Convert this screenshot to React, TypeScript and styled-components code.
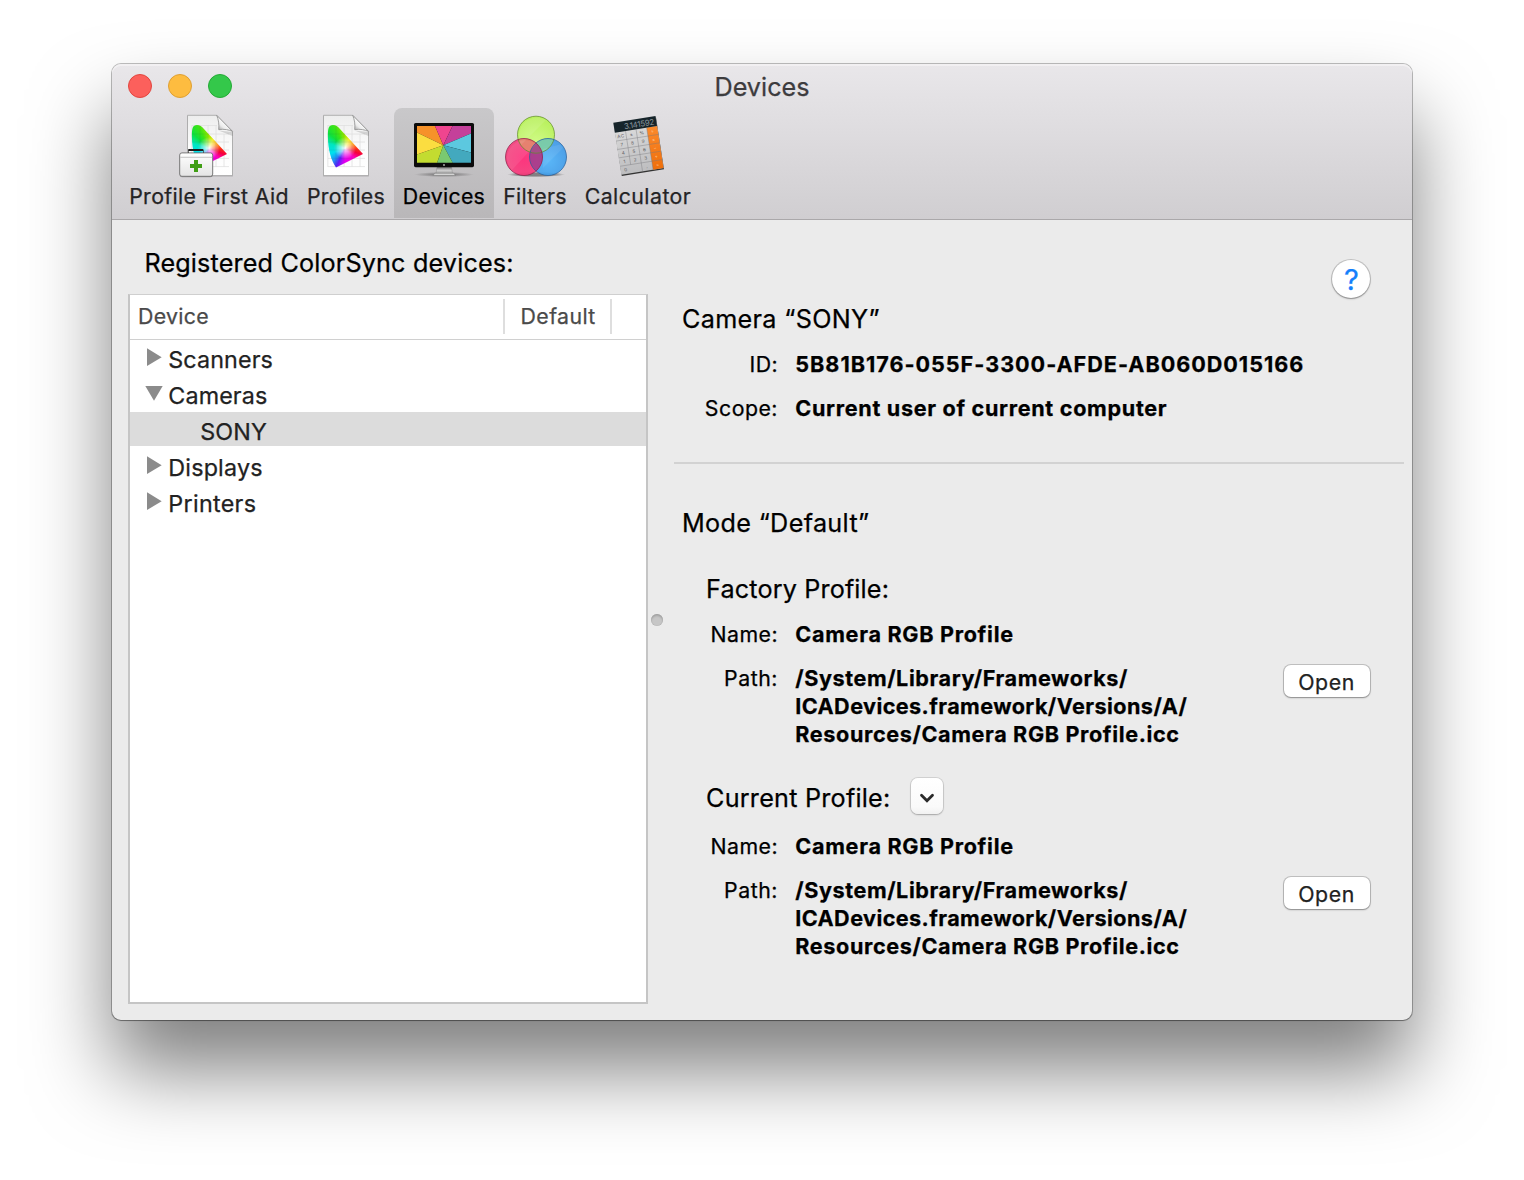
import React from "react";
import styled, { createGlobalStyle } from "styled-components";

const GlobalStyle = createGlobalStyle`
  * { box-sizing: border-box; }
  html, body { margin: 0; background: #fff; }
  body {
    font-family: Inter, "Liberation Sans", sans-serif;
    color: #000;
    overflow: hidden;
    -webkit-text-stroke: 0.25px currentColor;
  }
  button { font: inherit; color: inherit; padding: 0; border: 0; }
  svg text { -webkit-text-stroke: 0; }
`;

/* ---------- window chrome ---------- */

const Desktop = styled.div`
  width: 1524px;
  height: 1180px;
  padding: 64px 112px 0;
  overflow: hidden;
`;

const Window = styled.div`
  display: flex;
  flex-direction: column;
  width: 1300px;
  height: 956px;
  border-radius: 9px;
  background: #ebebeb;
  box-shadow: 0 0 0 1px rgba(0, 0, 0, 0.25), 0 1px 1px rgba(0, 0, 0, 0.25), 0 50px 80px rgba(0, 0, 0, 0.5);
`;

const Header = styled.header`
  height: 156px;
  border-bottom: 1px solid #aaa8aa;
  border-radius: 9px 9px 0 0;
  background: linear-gradient(#e9e7ea, #d0ced1);
  box-shadow: inset 0 2px 0 rgba(255, 255, 255, 0.4);
`;

const TitleBar = styled.div`
  display: grid;
  grid-template-columns: 1fr auto 1fr;
  align-items: center;
  height: 44px;
  padding: 0 16px;
`;

const Lights = styled.div`
  display: flex;
  gap: 16px;
`;

const Light = styled.span<{ $fill: string; $edge: string }>`
  width: 24px;
  height: 24px;
  border-radius: 50%;
  border: 1px solid ${(p) => p.$edge};
  background: ${(p) => p.$fill};
`;

const Title = styled.h1`
  margin: 2px 0 0;
  font-size: 25.2px;
  font-weight: 400;
  line-height: 30px;
  color: #3d3c3e;
`;

const Toolbar = styled.nav`
  display: flex;
  height: 110px;
  padding-left: 8px;
`;

const ToolItem = styled.button<{ $width: number; $active?: boolean; $track: number }>`
  display: flex;
  flex-direction: column;
  align-items: center;
  gap: 4px;
  width: ${(p) => p.$width}px;
  height: 110px;
  padding-top: 6px;
  border-radius: 8px 8px 0 0;
  background: ${(p) => (p.$active ? "linear-gradient(#c9c8ca, #b9b7b9)" : "none")};
  color: ${(p) => (p.$active ? "#000" : "#242325")};
  font-size: 21.3px;
  line-height: 28px;
  letter-spacing: ${(p) => p.$track}px;
  white-space: nowrap;
`;

const IconBox = styled.svg`
  display: block;
  width: 64px;
  height: 64px;
  overflow: visible;
`;

/* ---------- content ---------- */

const Content = styled.main`
  display: flex;
  flex: 1;
  min-height: 0;
`;

const Sidebar = styled.section`
  display: flex;
  flex-direction: column;
  width: 520px;
  margin: 28px 0 16px 16px;
`;

const SidebarTitle = styled.h2`
  margin: 0 0 16px;
  padding-left: 16.4px;
  font-size: 25.2px;
  font-weight: 400;
  line-height: 30px;
  letter-spacing: 0.16px;
`;

const DeviceList = styled.div`
  flex: 1;
  border: 2px solid #c5c5c5;
  border-top: 1px solid #cfcfcf;
  background: #fff;
`;

const ListHeader = styled.div`
  display: flex;
  height: 45px;
  padding-top: 4px;
  border-bottom: 1px solid #d0d0d0;
`;

const HeaderCell = styled.div<{ $width: number; $pad: number; $track: number }>`
  width: ${(p) => p.$width}px;
  height: 35px;
  padding-left: ${(p) => p.$pad}px;
  border-right: 2px solid #dedede;
  font-size: 21.3px;
  line-height: 35px;
  letter-spacing: ${(p) => p.$track}px;
  color: #4a4a4a;
`;

const Tree = styled.div`
  display: flex;
  flex-direction: column;
  gap: 2px;
`;

const TreeRow = styled.div<{ $child?: boolean; $selected?: boolean; $track: number }>`
  display: flex;
  align-items: center;
  height: 34px;
  padding-left: ${(p) => (p.$child ? 70.3 : 14)}px;
  background: ${(p) => (p.$selected ? "#dcdcdc" : "transparent")};
  font-size: 23.3px;
  line-height: 34px;
  letter-spacing: ${(p) => p.$track}px;
  color: #222;
`;

const RowText = styled.span`
  padding-top: 6px;
`;

const Disclosure = styled.svg`
  width: 20px;
  height: 34px;
  margin-right: 4.3px;
  fill: #8b8b8b;
`;

const Splitter = styled.div`
  display: flex;
  align-items: center;
  justify-content: center;
  width: 18px;
`;

const SplitterKnob = styled.span`
  width: 12px;
  height: 12px;
  border-radius: 50%;
  background: #c6c6c6;
  box-shadow: inset 0 2px 2px rgba(0, 0, 0, 0.16), inset 0 0 1px rgba(0, 0, 0, 0.22);
`;

const Details = styled.section`
  display: flex;
  flex-direction: column;
  flex: 1;
  padding: 39px 0 0 8px;
`;

const HelpRow = styled.div`
  display: flex;
  justify-content: flex-end;
  height: 45px;
  padding-right: 42px;
`;

const HelpButton = styled.button`
  width: 38px;
  height: 38px;
  margin-top: 1px;
  padding: 1px 0 0 1px;
  border-radius: 50%;
  background: #fff;
  box-shadow: 0 0 0 1px rgba(0, 0, 0, 0.17), 0 1px 2px rgba(0, 0, 0, 0.3);
  color: #1580fb;
  font-size: 29px;
  line-height: 38px;
`;

const Heading = styled.h3<{ $top?: number; $indent?: number; $track: number }>`
  margin: ${(p) => p.$top ?? 0}px 0 0;
  padding-left: ${(p) => p.$indent ?? 8}px;
  font-size: 25.2px;
  font-weight: 400;
  line-height: 31px;
  letter-spacing: ${(p) => p.$track}px;
`;

const Divider = styled.hr`
  width: 730px;
  height: 2px;
  margin: 40px 0 0;
  border: 0;
  background: #d2d2d2;
`;

const Fields = styled.dl<{ $top: number }>`
  display: grid;
  grid-template-columns: 104px 471px 88px;
  column-gap: 17px;
  row-gap: 16px;
  margin: ${(p) => p.$top}px 0 0;
  font-size: 21.3px;
  line-height: 28px;
`;

const Label = styled.dt<{ $track: number }>`
  text-align: right;
  letter-spacing: ${(p) => p.$track}px;
`;

const Value = styled.dd<{ $wide?: boolean }>`
  grid-column: ${(p) => (p.$wide ? "2 / 4" : "2")};
  margin: 0;
  padding-left: 0.3px;
  font-size: 21.6px;
  font-weight: 700;
  white-space: nowrap;
`;

const ValueLine = styled.span<{ $track: number }>`
  display: block;
  letter-spacing: ${(p) => p.$track}px;
`;

const OpenButton = styled.button`
  width: 86px;
  height: 32px;
  margin: 1px 0 0 1px;
  padding: 2px 1px 0 0;
  border-radius: 7px;
  background: #fff;
  box-shadow: 0 0 0 1px rgba(0, 0, 0, 0.18), 0 1px 2px rgba(0, 0, 0, 0.28);
  font-size: 21.3px;
  line-height: 31px;
  letter-spacing: 0.6px;
  color: #222;
`;

const CurrentRow = styled.div`
  display: flex;
  gap: 20px;
  height: 38px;
  margin-top: 29px;
`;

const PopupButton = styled.button`
  display: flex;
  align-items: center;
  justify-content: center;
  width: 32px;
  height: 36px;
  margin-top: 1px;
  padding-top: 3px;
  border-radius: 7px;
  background: linear-gradient(#fff, #fafafa 80%, #f1f1f1);
  box-shadow: 0 0 0 1px rgba(0, 0, 0, 0.1), 0 1px 2px rgba(0, 0, 0, 0.22);
`;

/* Chromaticity diagram fill: hues swept round a white point. */
const Gamut = styled.div`
  width: 64px;
  height: 64px;
  clip-path: path("M22 53.500 C17.5 47 14 36 13.9 23 C13.8 14.500 14.500 11 19 11 C22 11 23.5 12.4 25.5 14.6 L49 40 Z");
  background: radial-gradient(circle at 31px 34px, #fff 0, rgba(255, 255, 255, 0.65) 3.5px, rgba(255, 255, 255, 0) 11px),
    conic-gradient(
      from 0deg at 31px 34px,
      #a0e800 0deg,
      #f0e800 25deg,
      #ffa000 60deg,
      #ff2a1a 95deg,
      #f5003c 112deg,
      #ff00c8 140deg,
      #e000f5 184deg,
      #5a20f5 205deg,
      #2090f5 222deg,
      #00e0f0 248deg,
      #00e6c0 285deg,
      #0fe03c 312deg,
      #3fe414 335deg,
      #a0e800 360deg
    );
`;

/* ---------- icons ---------- */

function ProfileSheet({ id }: { id: string }) {
  return (
    <>
      <defs>
        <linearGradient id={`${id}-paper`} x1="0" y1="0" x2="0" y2="1">
          <stop offset="0" stopColor="#ededed" />
          <stop offset="0.5" stopColor="#fbfbfb" />
          <stop offset="1" stopColor="#fff" />
        </linearGradient>
        <linearGradient id={`${id}-fold`} x1="0.1" y1="1" x2="0.6" y2="0.4">
          <stop offset="0" stopColor="#8f8f8f" />
          <stop offset="0.5" stopColor="#ececec" />
          <stop offset="1" stopColor="#fff" />
        </linearGradient>
      </defs>
      <path d="M9.2 2h29.6L54.8 18v44.6H9.2z" fill="#000" opacity="0.16" />
      <path d="M9.5 1.3h29.2L54.5 17.4v44.2h-45z" fill={`url(#${id}-paper)`} stroke="#a2a2a2" strokeWidth="0.8" />
      <path
        d="M14 11.5h25M14 20h37M14 28h37M14 36h37M14 44.4h37M14 52.6h37M13.8 11v42M22 11v42M30 11v42M38 11v42M46 20v33"
        stroke="#e0e0e0"
        strokeWidth="0.8"
        fill="none"
      />
      <foreignObject x="0" y="0" width="64" height="64">
        <Gamut />
      </foreignObject>
      <path
        d="M14 20h17M14 28h24M15 36h30M17 44.4h24M22 12v40M30 20v29M38 29v16"
        stroke="#444"
        strokeOpacity="0.1"
        strokeWidth="0.8"
        fill="none"
      />
      <path d="M40.5 16.500 L54.5 18 L54.5 22 Z" fill="#000" opacity="0.14" />
      <path
        d="M38.7 1.3c1.8 4 2.6 9.500 2 14.300 5.500-.8 10.500.2 13.800 1.800z"
        fill={`url(#${id}-fold)`}
        stroke="#8d8d8d"
        strokeWidth="0.8"
      />
    </>
  );
}

const ProfilesIcon = () => (
  <IconBox viewBox="0 0 64 64">
    <ProfileSheet id="profiles" />
  </IconBox>
);

const FirstAidIcon = () => (
  <IconBox viewBox="0 0 64 64">
    <defs>
      <linearGradient id="kit" x1="0" y1="0" x2="0" y2="1">
        <stop offset="0" stopColor="#fff" />
        <stop offset="1" stopColor="#e4e4e4" />
      </linearGradient>
    </defs>
    <g transform="translate(1 0)">
      <ProfileSheet id="aid" />
    </g>
    <path d="M11.5 40v-2.600q0-1.700 1.700-1.700h11.600q1.700 0 1.700 1.700V40" fill="none" stroke="#444" strokeWidth="1" />
    <rect x="11" y="35" width="15.500" height="2" rx="1" fill="#1d1d1d" />
    <rect x="2.700" y="39.200" width="33" height="24" rx="2.500" fill="#000" opacity="0.25" />
    <rect x="2.700" y="38.900" width="33" height="23.400" rx="2.200" fill="url(#kit)" stroke="#6e6e6e" strokeWidth="0.9" />
    <path d="M3.200 43.300h32" stroke="#bdbdbd" strokeWidth="0.9" />
    <path d="M17 46h4v4h4v4h-4v4h-4v-4h-4v-4h4z" fill="#3f9e14" />
  </IconBox>
);

const DevicesIcon = () => (
  <IconBox viewBox="0 0 64 64">
    <defs>
      <linearGradient id="stand" x1="0" y1="0" x2="0" y2="1">
        <stop offset="0" stopColor="#6f6f6f" />
        <stop offset="0.5" stopColor="#cfcfcf" />
        <stop offset="1" stopColor="#a0a0a0" />
      </linearGradient>
      <radialGradient id="floor">
        <stop offset="0" stopColor="#000" stopOpacity="0.45" />
        <stop offset="1" stopColor="#000" stopOpacity="0" />
      </radialGradient>
      <clipPath id="screen">
        <rect x="5" y="12" width="54" height="36.800" />
      </clipPath>
    </defs>
    <ellipse cx="32" cy="60.500" rx="30" ry="2.600" fill="url(#floor)" />
    <path d="M25 53h14.500l1 6.500H24z" fill="url(#stand)" stroke="#858585" strokeWidth="0.4" />
    <path d="M22.800 59.200h19l1.700 2.300H21z" fill="#d4d4d4" stroke="#757575" strokeWidth="0.5" />
    <rect x="2" y="9" width="60" height="44.200" rx="1.600" fill="#0b0b0b" />
    <g clipPath="url(#screen)">
      <path d="M31.300 31.300 L23 12H5v6.500z" fill="#f6922a" />
      <path d="M31.300 31.300 L23 12h17.500z" fill="#f0458f" />
      <path d="M31.300 31.300 L40.500 12H59v7.500z" fill="#c4409a" />
      <path d="M31.300 31.300 L59 19.500V38.500z" fill="#5cc8df" />
      <path d="M31.300 31.300 L59 38.500V49H40.800z" fill="#43a9be" />
      <path d="M31.300 31.300 L40.800 49H25z" fill="#7ac970" />
      <path d="M31.300 31.300 L25 49H5v-8.500z" fill="#c3dc30" />
      <path d="M31.300 31.300 L5 40.500v-22z" fill="#fbdd40" />
    </g>
    <circle cx="32" cy="51" r="0.900" fill="#bbb" />
  </IconBox>
);

const FiltersIcon = () => (
  <IconBox viewBox="0 0 64 64">
    <defs>
      <radialGradient id="lime" cx="0.500" cy="0.750" r="0.700">
        <stop offset="0" stopColor="#d0ff80" />
        <stop offset="1" stopColor="#b4f24e" />
      </radialGradient>
      <radialGradient id="sky" cx="0.500" cy="0.600" r="0.600">
        <stop offset="0" stopColor="#4fb4fb" />
        <stop offset="1" stopColor="#3f98e6" />
      </radialGradient>
      <radialGradient id="rose" cx="0.500" cy="0.550" r="0.600">
        <stop offset="0" stopColor="#ff2b78" />
        <stop offset="1" stopColor="#f2457f" />
      </radialGradient>
      <radialGradient id="ground">
        <stop offset="0.600" stopColor="#000" stopOpacity="0.4" />
        <stop offset="1" stopColor="#000" stopOpacity="0" />
      </radialGradient>
      <clipPath id="limeClip">
        <circle cx="33" cy="20.700" r="18.500" />
      </clipPath>
      <clipPath id="roseClip">
        <circle cx="21" cy="43" r="18.500" />
      </clipPath>
    </defs>
    <ellipse cx="33" cy="60.500" rx="29" ry="2.600" fill="url(#ground)" />
    <circle cx="33" cy="20.700" r="18.500" fill="url(#lime)" fillOpacity="0.9" />
    <circle cx="45" cy="43" r="18.500" fill="url(#sky)" fillOpacity="0.92" />
    <circle cx="21" cy="43" r="18.500" fill="url(#rose)" fillOpacity="0.94" />
    <g clipPath="url(#limeClip)">
      <circle cx="45" cy="43" r="18.500" fill="#86d49c" fillOpacity="0.8" />
      <circle cx="21" cy="43" r="18.500" fill="#e0805f" fillOpacity="0.85" />
    </g>
    <g clipPath="url(#roseClip)">
      <circle cx="45" cy="43" r="18.500" fill="#9a3f90" fillOpacity="0.8" />
    </g>
    <path d="M16 21A18 18 0 0 1 43 6L18 31A18 18 0 0 1 16 21z" fill="#fff" opacity="0.1" />
    <path d="M4 45A18 18 0 0 1 33 30L9 56A18 18 0 0 1 4 45z" fill="#fff" opacity="0.08" />
    <path d="M40 35L57 30.500A18 18 0 0 1 60 34L40 54z" fill="#fff" opacity="0.08" />
    <g fill="none" strokeWidth="0.9">
      <circle cx="33" cy="20.700" r="18.500" stroke="#5f8a2a" strokeOpacity="0.8" />
      <circle cx="45" cy="43" r="18.500" stroke="#235f9c" strokeOpacity="0.8" />
      <circle cx="21" cy="43" r="18.500" stroke="#8c1c46" strokeOpacity="0.8" />
    </g>
  </IconBox>
);

const CALC_KEYS = [
  ["AC", "±", "%", "÷"],
  ["7", "8", "9", "×"],
  ["4", "5", "6", "−"],
  ["1", "2", "3", "+"],
  ["0", "", ".", "="],
];

const CalculatorIcon = () => (
  <IconBox viewBox="0 0 64 64">
    <defs>
      <linearGradient id="keys" x1="0" y1="0" x2="0" y2="1">
        <stop offset="0" stopColor="#dedede" />
        <stop offset="1" stopColor="#bdbdbf" />
      </linearGradient>
      <linearGradient id="ops" x1="0" y1="0" x2="0" y2="1">
        <stop offset="0" stopColor="#fb8a2c" />
        <stop offset="1" stopColor="#ef6f0c" />
      </linearGradient>
    </defs>
    <g transform="matrix(0.988 -0.156 0.152 0.988 7.300 8.700)">
      <rect x="0.300" y="1" width="42.700" height="52.900" fill="#333" />
      <rect width="42.700" height="52.600" fill="url(#keys)" />
      <rect x="32.200" y="10" width="10.500" height="42.600" fill="url(#ops)" />
      <rect width="42.700" height="10.200" fill="#16242a" />
      <text x="41" y="8.300" textAnchor="end" fontSize="8" fill="#86929a" textLength="31">
        3.141592
      </text>
      <path
        d="M0 18.600h42.700M0 27.100h42.700M0 35.600h42.700M0 44.100h42.700M10.800 10.200v33.900M21.500 10.200v42.400M32.200 10.200v42.400"
        stroke="#77777b"
        strokeOpacity="0.65"
        strokeWidth="0.6"
      />
      {CALC_KEYS.map((row, r) =>
        row.map((key, c) => (
          <text
            key={`${r}-${c}`}
            x={5.4 + c * 10.7}
            y={16.1 + r * 8.5}
            textAnchor="middle"
            fontSize={4.6}
            fill={c === 3 ? "#ffd0a0" : "#5a5a5c"}
          >
            {key}
          </text>
        ))
      )}
    </g>
  </IconBox>
);

const TOOLS = [
  { label: "Profile First Aid", width: 178, track: 0.36, Icon: FirstAidIcon },
  { label: "Profiles", width: 96, track: 0.27, Icon: ProfilesIcon },
  { label: "Devices", width: 100, track: 0.28, Icon: DevicesIcon, active: true },
  { label: "Filters", width: 82, track: 0.28, Icon: FiltersIcon },
  { label: "Calculator", width: 124, track: 0.45, Icon: CalculatorIcon },
];

const DEVICES = [
  { name: "Scanners", track: 0.12, state: "closed" },
  { name: "Cameras", track: 0.12, state: "open" },
  { name: "SONY", track: 0.1, state: "leaf" },
  { name: "Displays", track: 0.2, state: "closed" },
  { name: "Printers", track: 0.32, state: "closed" },
];

function ProfileFields({ top }: { top: number }) {
  return (
    <Fields $top={top}>
      <Label $track={0.45}>Name:</Label>
      <Value $wide>
        <ValueLine $track={0.7}>Camera RGB Profile</ValueLine>
      </Value>
      <Label $track={0.55}>Path:</Label>
      <Value>
        <ValueLine $track={0.57}>/System/Library/Frameworks/</ValueLine>
        <ValueLine $track={0.42}>ICADevices.framework/Versions/A/</ValueLine>
        <ValueLine $track={0.63}>Resources/Camera RGB Profile.icc</ValueLine>
      </Value>
      <OpenButton>Open</OpenButton>
    </Fields>
  );
}

export default function App() {
  return (
    <Desktop>
      <GlobalStyle />
      <Window>
        <Header>
          <TitleBar>
            <Lights>
              <Light $fill="#fc605c" $edge="#e2463f" />
              <Light $fill="#fdbc40" $edge="#dfa033" />
              <Light $fill="#34c84a" $edge="#24aa35" />
            </Lights>
            <Title>Devices</Title>
          </TitleBar>
          <Toolbar>
            {TOOLS.map(({ label, width, track, Icon, active }) => (
              <ToolItem key={label} $width={width} $track={track} $active={active}>
                <Icon />
                {label}
              </ToolItem>
            ))}
          </Toolbar>
        </Header>
        <Content>
          <Sidebar>
            <SidebarTitle>Registered ColorSync devices:</SidebarTitle>
            <DeviceList>
              <ListHeader>
                <HeaderCell $width={375} $pad={8} $track={0.3}>
                  Device
                </HeaderCell>
                <HeaderCell $width={107} $pad={15.6} $track={0.38}>
                  Default
                </HeaderCell>
              </ListHeader>
              <Tree>
                {DEVICES.map(({ name, track, state }) => (
                  <TreeRow key={name} $track={track} $child={state === "leaf"} $selected={state === "leaf"}>
                    {state !== "leaf" && (
                      <Disclosure viewBox="0 0 20 34">
                        <path d={state === "open" ? "M1.300 10h17.400L10 24.700z" : "M3 8.300v17.700l14.700-8.850z"} />
                      </Disclosure>
                    )}
                    <RowText>{name}</RowText>
                  </TreeRow>
                ))}
              </Tree>
            </DeviceList>
          </Sidebar>
          <Splitter>
            <SplitterKnob />
          </Splitter>
          <Details>
            <HelpRow>
              <HelpButton>?</HelpButton>
            </HelpRow>
            <Heading $track={0.32}>Camera “SONY”</Heading>
            <Fields $top={15}>
              <Label $track={0.4}>ID:</Label>
              <Value $wide>
                <ValueLine $track={0.98}>5B81B176-055F-3300-AFDE-AB060D015166</ValueLine>
              </Value>
              <Label $track={0.5}>Scope:</Label>
              <Value $wide>
                <ValueLine $track={0.69}>Current user of current computer</ValueLine>
              </Value>
            </Fields>
            <Divider />
            <Heading $top={44} $track={0.33}>
              Mode “Default”
            </Heading>
            <Heading $top={35} $indent={32} $track={0.15}>
              Factory Profile:
            </Heading>
            <ProfileFields top={15} />
            <CurrentRow>
              <Heading $top={6} $indent={32} $track={0.23}>
                Current Profile:
              </Heading>
              <PopupButton aria-label="Choose profile">
                <svg width="16" height="12" viewBox="0 0 16 12" fill="none">
                  <path d="M2.500 3.200L8 8.700l5.500-5.500" stroke="#2a2a2a" strokeWidth="2.800" strokeLinecap="round" />
                </svg>
              </PopupButton>
            </CurrentRow>
            <ProfileFields top={17} />
          </Details>
        </Content>
      </Window>
    </Desktop>
  );
}
